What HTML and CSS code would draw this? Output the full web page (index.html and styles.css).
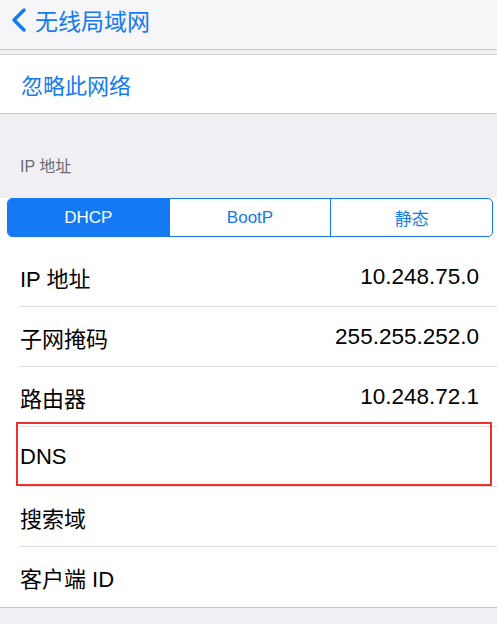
FILE: index.html
```html
<!DOCTYPE html>
<html lang="zh">

<head>
    <meta charset="utf-8">
    <link rel="stylesheet" href="styles.css">
</head>

<body>
    <div class="nav-bar">
        <span class="back-icon">
            <svg width="16" height="24" viewBox="0 0 16 24" fill="none" xmlns="http://www.w3.org/2000/svg">
                <path d="M13 2L3 12L13 22" stroke="#1479f2" stroke-width="3.4" stroke-linecap="round" stroke-linejoin="round"/>
            </svg>
        </span>
        <span class="nav-title">无线局域网</span>
    </div>

    <div class="group first-group">
        <div class="action-row">忽略此网络</div>
    </div>

    <div class="section-header">IP 地址</div>

    <div class="group">
        <div class="segmented">
            <div class="segment active">DHCP</div>
            <div class="segment">BootP</div>
            <div class="segment">静态</div>
        </div>

        <div class="info-row">
            <span class="row-label">IP 地址</span>
            <span class="row-value">10.248.75.0</span>
        </div>
        <div class="info-row">
            <span class="row-label">子网掩码</span>
            <span class="row-value">255.255.252.0</span>
        </div>
        <div class="info-row">
            <span class="row-label">路由器</span>
            <span class="row-value">10.248.72.1</span>
        </div>
        <div class="info-row highlighted">
            <span class="row-label">DNS</span>
            <span class="row-value"></span>
            <div class="mark-box"></div>
        </div>
        <div class="info-row">
            <span class="row-label">搜索域</span>
            <span class="row-value"></span>
        </div>
        <div class="info-row last">
            <span class="row-label">客户端 ID</span>
            <span class="row-value"></span>
        </div>
    </div>
</body>

</html>
```

FILE: styles.css
```css
html, body {
    margin: 0;
    padding: 0;
}

body {
    width: 497px;
    height: 624px;
    overflow: hidden;
    background: #efeff4;
    font-family: "Liberation Sans", "Noto Sans CJK SC", sans-serif;
    color: #000;
}

.nav-bar {
    height: 50px;
    background: #f6f6f8;
    border-bottom: 1px solid #c8c7cc;
    display: flex;
    align-items: center;
    padding-left: 11px;
    box-sizing: border-box;
}

.back-icon {
    display: flex;
    margin-top: -10px;
}

.nav-title {
    color: #1479f2;
    font-size: 23px;
    margin-left: 8px;
    margin-top: -10px;
}

.group {
    background: #fff;
    border-top: 1px solid #d8d8dc;
    border-bottom: 1px solid #c8c7cc;
}

.first-group {
    margin-top: 4px;
}

.action-row {
    height: 58px;
    display: flex;
    align-items: center;
    padding-left: 21px;
    color: #1479f2;
    font-size: 22px;
}

.section-header {
    height: 73px;
    box-sizing: border-box;
    padding: 0 20px 10px;
    display: flex;
    align-items: flex-end;
    font-size: 16px;
    color: #6d6d72;
}

.group + .section-header + .group {
    border-top: none;
}

.segmented {
    display: flex;
    margin: 11px 4px 10px 7px;
    height: 39px;
    border: 1px solid #1479f2;
    border-radius: 5px;
    overflow: hidden;
    box-sizing: border-box;
}

.segment {
    flex: 1;
    display: flex;
    align-items: center;
    justify-content: center;
    color: #1479f2;
    font-size: 17px;
    border-left: 1px solid #1479f2;
}

.segment:first-child {
    border-left: none;
}

.segment.active {
    background: #1479f2;
    color: #fff;
}

.info-row {
    position: relative;
    height: 60px;
    margin-left: 20px;
    padding-right: 18px;
    display: flex;
    align-items: center;
    justify-content: space-between;
    border-bottom: 1px solid #dcdce0;
    box-sizing: border-box;
    font-size: 22px;
}

.info-row.last {
    border-bottom: none;
}

.row-value {
    color: #000;
    font-size: 22.5px;
}

.mark-box {
    position: absolute;
    top: -5px;
    left: -4px;
    right: 5px;
    bottom: 0;
    border: 2px solid #f0302c;
}
```
